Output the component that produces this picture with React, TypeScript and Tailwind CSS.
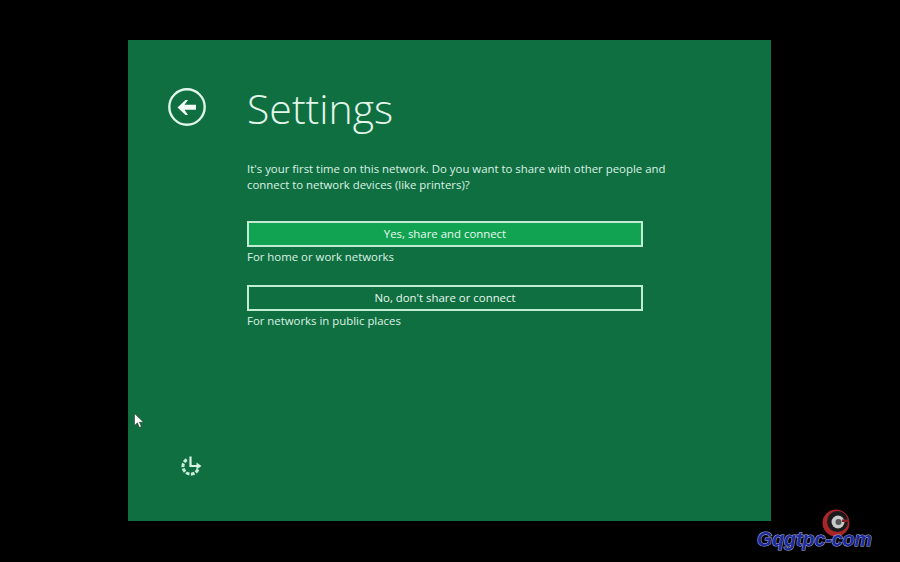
const Cursor = () => (
  <svg className="absolute left-[6px] top-[373px]" width="11" height="16" viewBox="0 0 11 16">
    <path d="M0.5 0.5 L0.5 12.5 L3.4 9.8 L5.4 14.5 L7.4 13.6 L5.4 9.2 L9.5 9.2 Z" fill="#fff" stroke="#222" strokeWidth="0.5" />
  </svg>
)

const BackIcon = () => (
  <svg width="38" height="38" viewBox="0 0 38 38">
    <circle cx="19" cy="19" r="17.7" fill="none" stroke="#dff5e9" strokeWidth="2.4" />
    <path d="M9.5 19.5 L17.5 12 L20 12 L16.5 16.8 L28 16.8 L28 21.8 L16.5 21.8 L20 27 L17.5 27 Z" fill="#f2fbf6" />
  </svg>
)

const EaseIcon = () => (
  <svg width="22" height="22" viewBox="0 0 22 22">
    <path d="M6.8 4.6 A7.8 7.8 0 1 0 18.2 13.6" fill="none" stroke="#c9eedb" strokeWidth="3" strokeDasharray="3.6 1.5" />
    <path d="M10.5 1.5 L10.5 11 L17 11" fill="none" stroke="#d8f4e5" strokeWidth="2.2" />
    <path d="M16.5 7.5 L21.5 11 L16.5 14.5 Z" fill="#d8f4e5" />
  </svg>
)

const Watermark = () => (
  <div className="absolute left-[757px] top-[508px] h-[44px] w-[114px]">
    <svg className="absolute left-[64px] top-0" width="30" height="30" viewBox="0 0 30 30">
      <circle cx="15" cy="15" r="13.5" fill="#a8262b" />
      <circle cx="16.5" cy="13.5" r="10.5" fill="#1a1a1a" />
      <circle cx="17" cy="14" r="6.5" fill="#c9c9c9" />
      <circle cx="17.5" cy="14" r="3" fill="#555" />
      <path d="M21 11.5 H28 V14 H21 Z" fill="#8a2025" />
    </svg>
    <span className="absolute left-0 top-[19px] text-[19.5px] leading-[25px] font-bold italic whitespace-nowrap text-[#1c2a9c] [font-family:'Liberation_Sans',sans-serif] [-webkit-text-stroke:1px_#aab2d8] [paint-order:stroke_fill]">
      Gqgtpc-com
    </span>
  </div>
)

export default function App() {
  return (
    <div className="relative flex h-[562px] w-[900px] items-start overflow-hidden bg-black pl-[128px] pt-[40px] text-[#dcf2e6] [font-family:'Open_Sans',sans-serif]">
      <div className="relative flex h-[481px] w-[643px] flex-col bg-[#0f6f40] pl-[39px]">
        <Cursor />
        <div className="flex h-[112px] items-start pt-[48px]">
          <div className="ml-[1px] w-[80px]">
            <BackIcon />
          </div>
          <h1 className="-mt-[10px] -ml-[1px] text-[41px] leading-[60px] font-light text-[#e4f6ec]">Settings</h1>
        </div>
        <div className="ml-[80px] flex w-[396px] flex-col">
          <p className="mt-[9px] w-[430px] text-[11.4px] leading-[16px]">
            It's your first time on this network. Do you want to share with other people and connect to network devices (like printers)?
          </p>
          <button className="mt-[28px] h-[26px] w-full border-2 border-[#c0ecd4] bg-[#12a352] text-[11.4px] font-medium text-[#e8f8ef]">
            Yes, share and connect
          </button>
          <p className="mt-[1px] text-[11.4px] leading-[17px]">For home or work networks</p>
          <button className="mt-[20px] h-[26px] w-full border-2 border-[#c0ecd4] text-[11.4px] font-medium text-[#e8f8ef]">
            No, don't share or connect
          </button>
          <p className="mt-[1px] text-[11.4px] leading-[17px]">For networks in public places</p>
        </div>
        <div className="mt-auto mb-[44px] ml-[13px]">
          <EaseIcon />
        </div>
      </div>
      <Watermark />
    </div>
  )
}
